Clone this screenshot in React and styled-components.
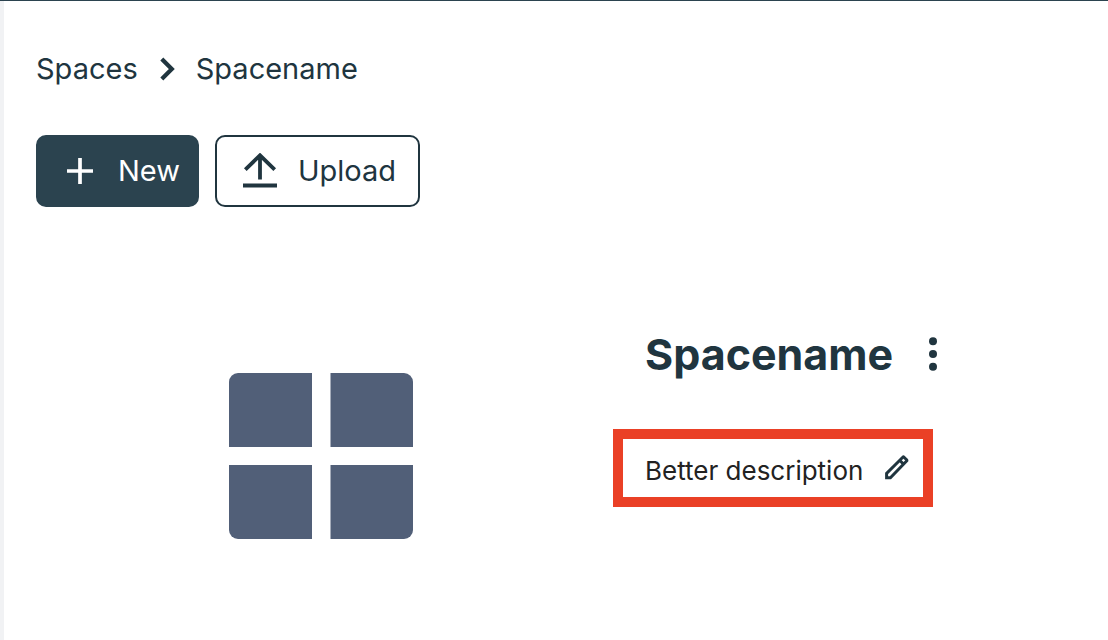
import React from "react";
import styled, { createGlobalStyle } from "styled-components";

const ink = "#20353f";

const GlobalStyle = createGlobalStyle`
  *, *::before, *::after { box-sizing: border-box; }
  body {
    margin: 0;
    background: #fff;
    color: ${ink};
    font-family: Inter, "Liberation Sans", sans-serif;
  }
  h1, p, ol { margin: 0; padding: 0; }
`;

const Page = styled.main`
  min-height: 100vh;
  border-top: 1px solid #2b434f;
  display: flex;
`;

const Edge = styled.div`
  width: 4px;
  flex: none;
  background: #f1f2f4;
`;

const Content = styled.div`
  flex: 1;
  min-width: 0;
  padding: 48px 36px 48px 32px;
`;

const Crumbs = styled.ol`
  display: flex;
  align-items: center;
  list-style: none;
  font-size: 29px;
  line-height: 40px;

  li { display: flex; align-items: center; }
  svg { margin: 0 21px; }
`;

const CrumbLink = styled.a`
  color: inherit;
  text-decoration: none;
`;

const Toolbar = styled.div`
  display: flex;
  gap: 16px;
  margin-top: 46px;
`;

const Button = styled.button`
  display: flex;
  align-items: center;
  gap: ${(p) => (p.$primary ? 24 : 21)}px;
  height: 72px;
  padding: ${(p) => (p.$primary ? "0 17px 0 28px" : "0 22px 0 26px")};
  border: 2px solid ${(p) => (p.$primary ? "#2b434f" : ink)};
  border-radius: 10px;
  background: ${(p) => (p.$primary ? "#2b434f" : "#fff")};
  color: ${(p) => (p.$primary ? "#fff" : ink)};
  font: inherit;
  font-size: 29px;
  line-height: 36px;
  cursor: pointer;
`;

const Space = styled.section`
  display: grid;
  grid-template-columns: 570fr 459fr;
  gap: 7px;
  margin-top: 120px;
`;

const Cover = styled.div`
  display: flex;
  justify-content: center;
  padding-top: 46px;
`;

const Details = styled.div`
  display: flex;
  flex-direction: column;
  align-items: flex-start;
`;

const TitleRow = styled.div`
  display: flex;
  align-items: center;
  gap: 34px;
  padding-left: 32px;
`;

const Title = styled.h1`
  font-size: 43px;
  line-height: 54px;
  font-weight: 700;
`;

const IconButton = styled.button`
  display: flex;
  padding: 0;
  border: 0;
  background: none;
  color: inherit;
  cursor: pointer;
`;

const Description = styled.div`
  display: flex;
  align-items: center;
  gap: 22px;
  height: 78px;
  margin-top: 48px;
  padding: 0 14px 0 22px;
  border: 10px solid #ea4026;
`;

const DescriptionText = styled.p`
  padding-top: 6px;
  font-size: 26px;
  line-height: 36px;
  color: #222;
`;

const Icon = ({ w, h, children }) => (
  <svg width={w} height={h} viewBox={`0 0 ${w} ${h}`} fill="none" stroke="currentColor" aria-hidden="true">
    {children}
  </svg>
);

export default function App() {
  return (
    <>
      <GlobalStyle />
      <Page>
        <Edge />
        <Content>
          <nav aria-label="Breadcrumb">
            <Crumbs>
              <li>
                <CrumbLink href="#spaces">Spaces</CrumbLink>
                <Icon w={16} h={24}>
                  <path d="M2.8 2 12.8 12l-10 10" strokeWidth="4.2" />
                </Icon>
              </li>
              <li aria-current="page">Spacename</li>
            </Crumbs>
          </nav>

          <Toolbar>
            <Button type="button" $primary>
              <Icon w={28} h={28}>
                <path d="M14 1v26M1 14h26" strokeWidth="3.7" />
              </Icon>
              New
            </Button>
            <Button type="button">
              <Icon w={34} h={36}>
                <path d="M17 26.5V2.5M2.3 16.7 17 2.3l14.7 14.4" strokeWidth="3.8" />
                <path d="M0 32.5h34" strokeWidth="4" />
              </Icon>
              Upload
            </Button>
          </Toolbar>

          <Space>
            <Cover>
              <svg width="184" height="166" viewBox="0 0 184 166" fill="#515f78" aria-hidden="true">
                <path d="M9 0h74v74H0V9a9 9 0 0 1 9-9Z" />
                <path d="M101.5 0H175a9 9 0 0 1 9 9v65h-82.5Z" />
                <path d="M0 92h83v74H9a9 9 0 0 1-9-9Z" />
                <path d="M101.5 92H184v65a9 9 0 0 1-9 9h-73.5Z" />
              </svg>
            </Cover>
            <Details>
              <TitleRow>
                <Title>Spacename</Title>
                <IconButton type="button" aria-label="Show context menu">
                  <svg width="12" height="36" viewBox="0 0 12 36" fill="currentColor" aria-hidden="true">
                    <circle cx="6" cy="5.3" r="4" />
                    <circle cx="6" cy="18" r="4" />
                    <circle cx="6" cy="30.7" r="4" />
                  </svg>
                </IconButton>
              </TitleRow>
              <Description>
                <DescriptionText>Better description</DescriptionText>
                <IconButton type="button" aria-label="Edit description">
                  <Icon w={24} h={32}>
                    <path
                      d="M1.6 25.8v-4.4L17.8 5.2q.6-.6 1.2 0l2.6 2.6q.6.6 0 1.2L5.4 25.8ZM14.4 8l4.6 4.6"
                      strokeWidth="3"
                    />
                  </Icon>
                </IconButton>
              </Description>
            </Details>
          </Space>
        </Content>
      </Page>
    </>
  );
}
